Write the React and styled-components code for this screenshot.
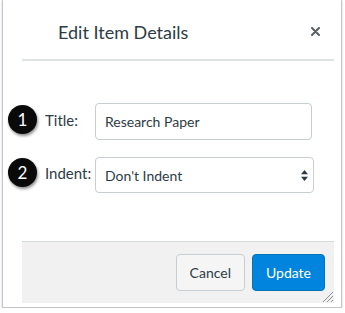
import React from 'react';
import styled, { createGlobalStyle } from 'styled-components';

const Global = createGlobalStyle`
    body {
        margin: 0;
        background: #fff;
        font-family: Lato, "Open Sans", sans-serif;
        color: #2d3b45;
    }
`

const App = () => {
    return (
        <>
            <Global />
            <Window>
                <Header>
                    <Heading>Edit Item Details</Heading>
                    <CloseButton aria-label="Close">
                        <svg width="9" height="9" viewBox="0 0 9 9">
                            <path d="M1 1 L8 8 M8 1 L1 8" stroke="#5a5f63" strokeWidth="2" strokeLinecap="round" />
                        </svg>
                    </CloseButton>
                </Header>
                <Body>
                    <Row>
                        <Badge>1</Badge>
                        <Label>Title:</Label>
                        <TextInput defaultValue="Research Paper" />
                    </Row>
                    <Row>
                        <Badge>2</Badge>
                        <Label>Indent:</Label>
                        <SelectWrap>
                            <Select defaultValue="0">
                                <option value="0">Don't Indent</option>
                                <option value="1">Indent 1 Level</option>
                            </Select>
                            <Arrows width="7" height="11" viewBox="0 0 7 11">
                                <path d="M3.5 0 L7 4.3 L0 4.3 Z M0 6.7 L7 6.7 L3.5 11 Z" fill="#2d3b45" />
                            </Arrows>
                        </SelectWrap>
                    </Row>
                </Body>
                <Footer>
                    <Button>Cancel</Button>
                    <Button primary>Update</Button>
                </Footer>
                <Grip width="11" height="11" viewBox="0 0 11 11">
                    <path d="M11 1 L1 11 M11 5 L5 11 M11 9 L9 11" stroke="#8a8f93" strokeWidth="1" />
                </Grip>
            </Window>
        </>
    );
}

const Window = styled.div`
    position: relative;
    margin-left: 2px;
    width: 340px;
    box-sizing: border-box;
    padding: 0 7px 4px 19px;
    border: 1px solid #c4c6c8;
    border-top: 0;
    box-shadow: 0 1px 2px rgba(0, 0, 0, 0.2);
    background: #fff;
`

const Header = styled.div`
    height: 61px;
    display: flex;
    align-items: center;
    justify-content: space-between;
    padding: 4px 14px 0 36px;
    box-sizing: border-box;
    border-bottom: 2px solid #dfe3e6;
`

const Heading = styled.h2`
    margin: 0;
    font-size: 18px;
    font-weight: 400;
    color: #2d3b45;
`

const CloseButton = styled.button`
    border: 0;
    background: none;
    padding: 0;
    display: flex;
    margin-top: 0;
`

const Body = styled.div`
    padding: 42px 0 48px;
    display: flex;
    flex-direction: column;
    gap: 16px;
`

const Row = styled.div`
    position: relative;
    display: flex;
    align-items: center;
    padding-left: 23px;
    height: 37px;
`

const Badge = styled.span`
    position: absolute;
    left: -14px;
    top: 2px;
    width: 29px;
    height: 29px;
    border-radius: 50%;
    background: #0a0a0a;
    color: #fff;
    font-size: 17px;
    display: flex;
    align-items: center;
    justify-content: center;
    box-shadow: 1px 2px 3px rgba(0, 0, 0, 0.45);
`

const Label = styled.label`
    width: 50px;
    font-size: 15px;
    margin-top: -4px;
`

const TextInput = styled.input`
    width: 217px;
    height: 37px;
    box-sizing: border-box;
    border: 1px solid #c7cdd1;
    border-radius: 4px;
    padding: 0 9px;
    font-family: inherit;
    font-size: 14px;
    color: #2d3b45;
    outline: none;
`

const SelectWrap = styled.div`
    position: relative;
    display: flex;
    margin-top: 1px;
`

const Select = styled.select`
    appearance: none;
    width: 219px;
    height: 36px;
    box-sizing: border-box;
    border: 1px solid #c7cdd1;
    border-radius: 4px;
    padding: 0 9px;
    background: #fff;
    font-family: inherit;
    font-size: 14px;
    color: #2d3b45;
    outline: none;
`

const Arrows = styled.svg`
    position: absolute;
    right: 6px;
    top: 13px;
    pointer-events: none;
`

const Footer = styled.div`
    height: 62px;
    box-sizing: border-box;
    border-top: 1px solid #d7dadc;
    background: #f1f1f1;
    display: flex;
    align-items: center;
    justify-content: flex-end;
    gap: 7px;
    padding-right: 9px;
`

const Button = styled.button`
    height: 37px;
    padding: 0 13px;
    border-radius: 4px;
    font-family: inherit;
    font-size: 14px;
    border: 1px solid ${props => props.primary ? '#0374b5' : '#c7cdd1'};
    background: ${props => props.primary ? '#0084dd' : '#f5f5f5'};
    color: ${props => props.primary ? '#fff' : '#2d3b45'};
`

const Grip = styled.svg`
    position: absolute;
    right: 8px;
    bottom: 5px;
`

export default App;
